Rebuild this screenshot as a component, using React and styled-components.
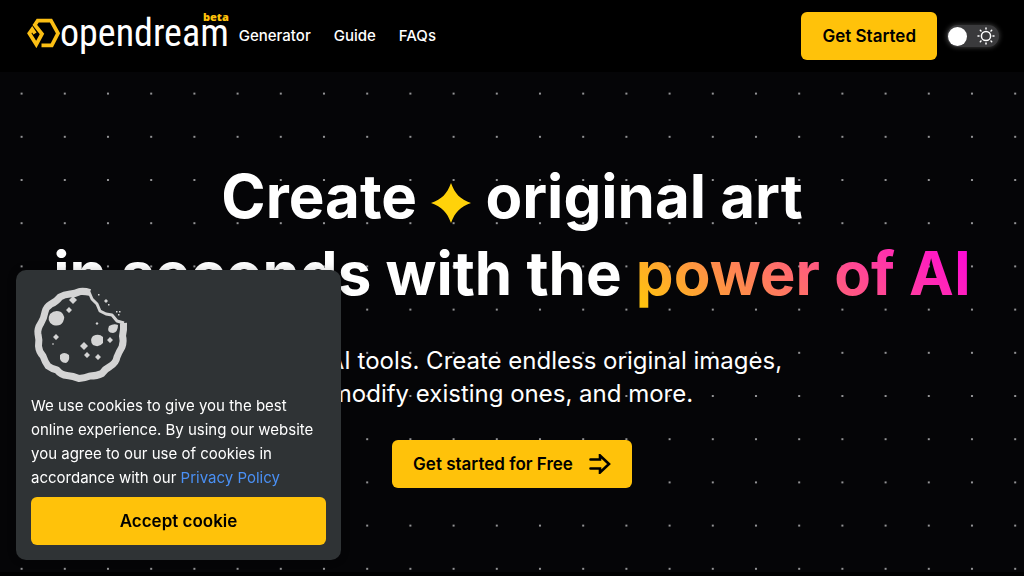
import React, { useState } from "react";
import styled, { createGlobalStyle } from "styled-components";

const App = () => {
  const [cookieOpen, setCookieOpen] = useState(true);

  return (
    <>
      <GlobalStyle />
      <Header>
        <Logo href="/" aria-label="opendream beta">
          <LogoMark viewBox="0 0 33 30" aria-hidden="true">
            <path d="M14.5 27.3H24.800L31 15.300L24 2.700H10.700L7.800 7L15 16L9.300 26.500L2.300 15.300L5.200 11.200L8 15.600" />
          </LogoMark>
          <Wordmark>opendream</Wordmark>
          <Beta>beta</Beta>
        </Logo>
        <Nav>
          <NavLink href="/generator">Generator</NavLink>
          <NavLink href="/guide">Guide</NavLink>
          <NavLink href="/faqs">FAQs</NavLink>
        </Nav>
        <Actions>
          <Button>Get Started</Button>
          <Toggle>
            <ToggleInput type="checkbox" aria-label="Light theme" />
            <Knob />
            <SunIcon viewBox="0 0 18 18" aria-hidden="true">
              <circle cx="9" cy="9" r="4.6" />
              <path d="M9 1v1M9 16v1M1 9h1M16 9h1M3.3 3.3l.7.7M14 14l.7.7M3.3 14.7l.7-.7M14 4l.7-.7" />
            </SunIcon>
          </Toggle>
        </Actions>
      </Header>

      <Hero>
        <Dots aria-hidden="true">
          <defs>
            <pattern
              id="dots"
              width="43.2"
              height="43.2"
              patternUnits="userSpaceOnUse"
            >
              <circle cx="21.6" cy="21.6" r="1.1" fill="#b4b4b6" />
            </pattern>
          </defs>
          <rect width="100%" height="100%" fill="url(#dots)" />
        </Dots>
        <HeroContent>
          <Title>
            Create{" "}
            <Star viewBox="0 0 40 40" aria-hidden="true">
              <path d="M20 0 C24 11 29 16 40 20 C29 24 24 29 20 40 C16 29 11 24 0 20 C11 16 16 11 20 0Z" />
            </Star>{" "}
            original art
            <br />
            in seconds with the <Gradient>power of AI</Gradient>
          </Title>
          <Subtitle>
            Unlock AI tools. Create endless original images,
            <br />
            modify existing ones, and more.
          </Subtitle>
          <Button>
            Get started for Free
            <ArrowIcon viewBox="0 0 22 20" aria-hidden="true">
              <path d="M1.5 5.5H11V1.5L20 10L11 18.5V14.5H1.5" />
            </ArrowIcon>
          </Button>
        </HeroContent>
      </Hero>

      {cookieOpen && (
        <CookieCard>
          <CookieIcon viewBox="0 0 96 96" aria-hidden="true">
            <path
              className="rim"
              d="M57 5.500 Q52 4 47 4.500 Q42 7 37 7 Q31 7.500 27 10 Q23 15 18 17 Q13 20 12 25 Q11 31 8 36 Q4 42 5 47 Q6.500 53 5.500 59 Q6 65 10 69 Q12 75 15 79 Q19 82 24 83 Q28 88 34 88.500 Q40 89 46 91.500 Q52 91 57 89 Q64 89 69 86.500 Q72 82 77 79.500 Q83 76 84 70 Q86 65 89 60 Q91 54 89.500 49 Q91 43 90.500 36"
            />
            <path
              className="bite"
              d="M56 5 L59 12 L64 17 L67 24 L73 27 L79 28 L84 34 L91 36"
            />
            <path d="M17 27Q22 22 28 25Q33 29 30 35Q27 40 20 38Q13 34 17 27Z" />
            <path d="M60 49Q66 46 70 50V56Q66 61 60 58Q56 53 60 49Z" />
            <path d="M76 39Q81 36 85 38Q85 45 80 46Q73 46 76 39Z" />
            <path d="M27 68Q31 64 36 68Q37 74 33 76Q26 76 27 68Z" />
            <path d="M40 9l4 4-4 4-4-4zM36 20l3 3-3 3-3-3zM23 47l3 3-3 3-3-3zM51 55l4 4-4 4-4-4zM54 65l3 3-3 3-3-3zM65 67l3 3-3 3-3-3zM77 50l3 3-3 3-3-3zM73 12l2 2-2 2-2-2zM20 56l1 1-1 1-1-1zM64 35l1.500 1.500-1.500 1.500-1.500-1.500z" />
            <path d="M65 7h1.500v1.500h-1.500zM75 17h1.500v1.500h-1.500zM83 24h1.500v1.500h-1.500zM86 24h1.500v1.500h-1.500zM85 27h1.500v1.500h-1.500z" />
          </CookieIcon>
          <CookieText>
            We use cookies to give you the best online experience. By using our
            website you agree to our use of cookies in accordance with our{" "}
            <a href="/privacy">Privacy Policy</a>
          </CookieText>
          <Button $wide onClick={() => setCookieOpen(false)}>
            Accept cookie
          </Button>
        </CookieCard>
      )}
    </>
  );
};

export default App;

// Styled here

const GlobalStyle = createGlobalStyle`
  * {
    box-sizing: border-box;
  }
  body {
    margin: 0;
    background: #000;
    color: #fff;
    font-family: Inter, "Liberation Sans", sans-serif;
  }
`;

const Header = styled.header`
  display: flex;
  align-items: center;
  height: 72px;
  padding: 0 25px 0 24px;
  background: #000;
`;

const Logo = styled.a`
  position: relative;
  display: flex;
  align-items: center;
  padding-bottom: 6px;
  color: #fff;
  text-decoration: none;
`;

const LogoMark = styled.svg`
  width: 33px;
  height: 30px;
  margin-left: 3px;
  fill: none;
  stroke: #fbbf14;
  stroke-width: 3.7;
`;

const Wordmark = styled.span`
  font-family: "Roboto Condensed", "Open Sans Condensed", sans-serif;
  font-size: 38px;
  line-height: 48px;
`;

const Beta = styled.span`
  position: absolute;
  top: 2px;
  right: 0;
  color: #ffc20a;
  font-family: "Open Sans", sans-serif;
  font-size: 11px;
  font-weight: 800;
  line-height: 12px;
`;

const Nav = styled.nav`
  display: flex;
  gap: 23px;
  margin-left: 10px;
`;

const NavLink = styled.a`
  color: #fff;
  font-size: 15px;
  font-weight: 500;
  line-height: 24px;
  text-decoration: none;
`;

const Actions = styled.div`
  display: flex;
  align-items: center;
  gap: 10px;
  margin-left: auto;
`;

const Button = styled.button`
  display: flex;
  align-items: center;
  justify-content: center;
  gap: 16px;
  width: ${(props) => (props.$wide ? "100%" : "auto")};
  height: 48px;
  padding: 0 21px;
  border: none;
  border-radius: 6px;
  background: #ffc20a;
  color: #000;
  font-family: inherit;
  font-size: 17px;
  font-weight: 600;
  line-height: 24px;
  cursor: pointer;
`;

const Toggle = styled.label`
  position: relative;
  display: flex;
  align-items: center;
  justify-content: space-between;
  width: 52px;
  height: 22px;
  padding: 0 4px 0 1px;
  border-radius: 11px;
  background: #3a3a3c;
  box-shadow: 0 0 4px 1px rgba(255, 255, 255, 0.2);
  cursor: pointer;
`;

const ToggleInput = styled.input`
  position: absolute;
  inset: 0;
  width: 100%;
  height: 100%;
  margin: 0;
  opacity: 0;
`;

const Knob = styled.span`
  width: 19px;
  height: 19px;
  border-radius: 50%;
  background: #fff;
`;

const SunIcon = styled.svg`
  width: 18px;
  height: 18px;
  fill: none;
  stroke: #fff;
  stroke-width: 1.5;
  stroke-linecap: round;
`;

const Hero = styled.section`
  position: relative;
  min-height: 500px;
  background: #050507;
`;

const Dots = styled.svg`
  position: absolute;
  inset: 0;
  width: 100%;
  height: 100%;
`;

const HeroContent = styled.div`
  position: relative;
  display: flex;
  flex-direction: column;
  align-items: center;
  padding: 86px 24px 84px;
  text-align: center;
`;

const Title = styled.h1`
  margin: 0;
  font-size: 60px;
  font-weight: 700;
  line-height: 77px;
`;

const Star = styled.svg`
  width: 40px;
  height: 40px;
  vertical-align: -5px;
  fill: #ffd20a;
`;

const Gradient = styled.span`
  background: linear-gradient(45deg, #ffc80a, #ff00e0);
  background-clip: text;
  color: transparent;
`;

const Subtitle = styled.p`
  margin: 32px 0 30px;
  font-size: 24px;
  font-weight: 400;
  line-height: 33px;
`;

const ArrowIcon = styled.svg`
  width: 22px;
  height: 20px;
  fill: none;
  stroke: #000;
  stroke-width: 2.6;
  stroke-linecap: round;
`;

const CookieCard = styled.aside`
  position: fixed;
  bottom: 16px;
  left: 16px;
  width: 325px;
  padding: 17px 15px 15px;
  border-radius: 10px;
  background: #2f3335;
  box-shadow: 0 0 10px rgba(0, 0, 0, 0.2);
`;

const CookieIcon = styled.svg`
  display: block;
  width: 96px;
  height: 96px;
  margin-left: 2px;
  fill: #d4d4d4;

  .rim {
    fill: none;
    stroke: #d4d4d4;
    stroke-width: 7;
    stroke-linejoin: round;
  }

  .bite {
    fill: none;
    stroke: #d4d4d4;
    stroke-width: 3;
    stroke-linejoin: round;
  }
`;

const CookieText = styled.p`
  margin: 11px 0 7px;
  font-size: 15px;
  line-height: 24px;

  a {
    color: #4a90f5;
    text-decoration: none;
  }
`;
